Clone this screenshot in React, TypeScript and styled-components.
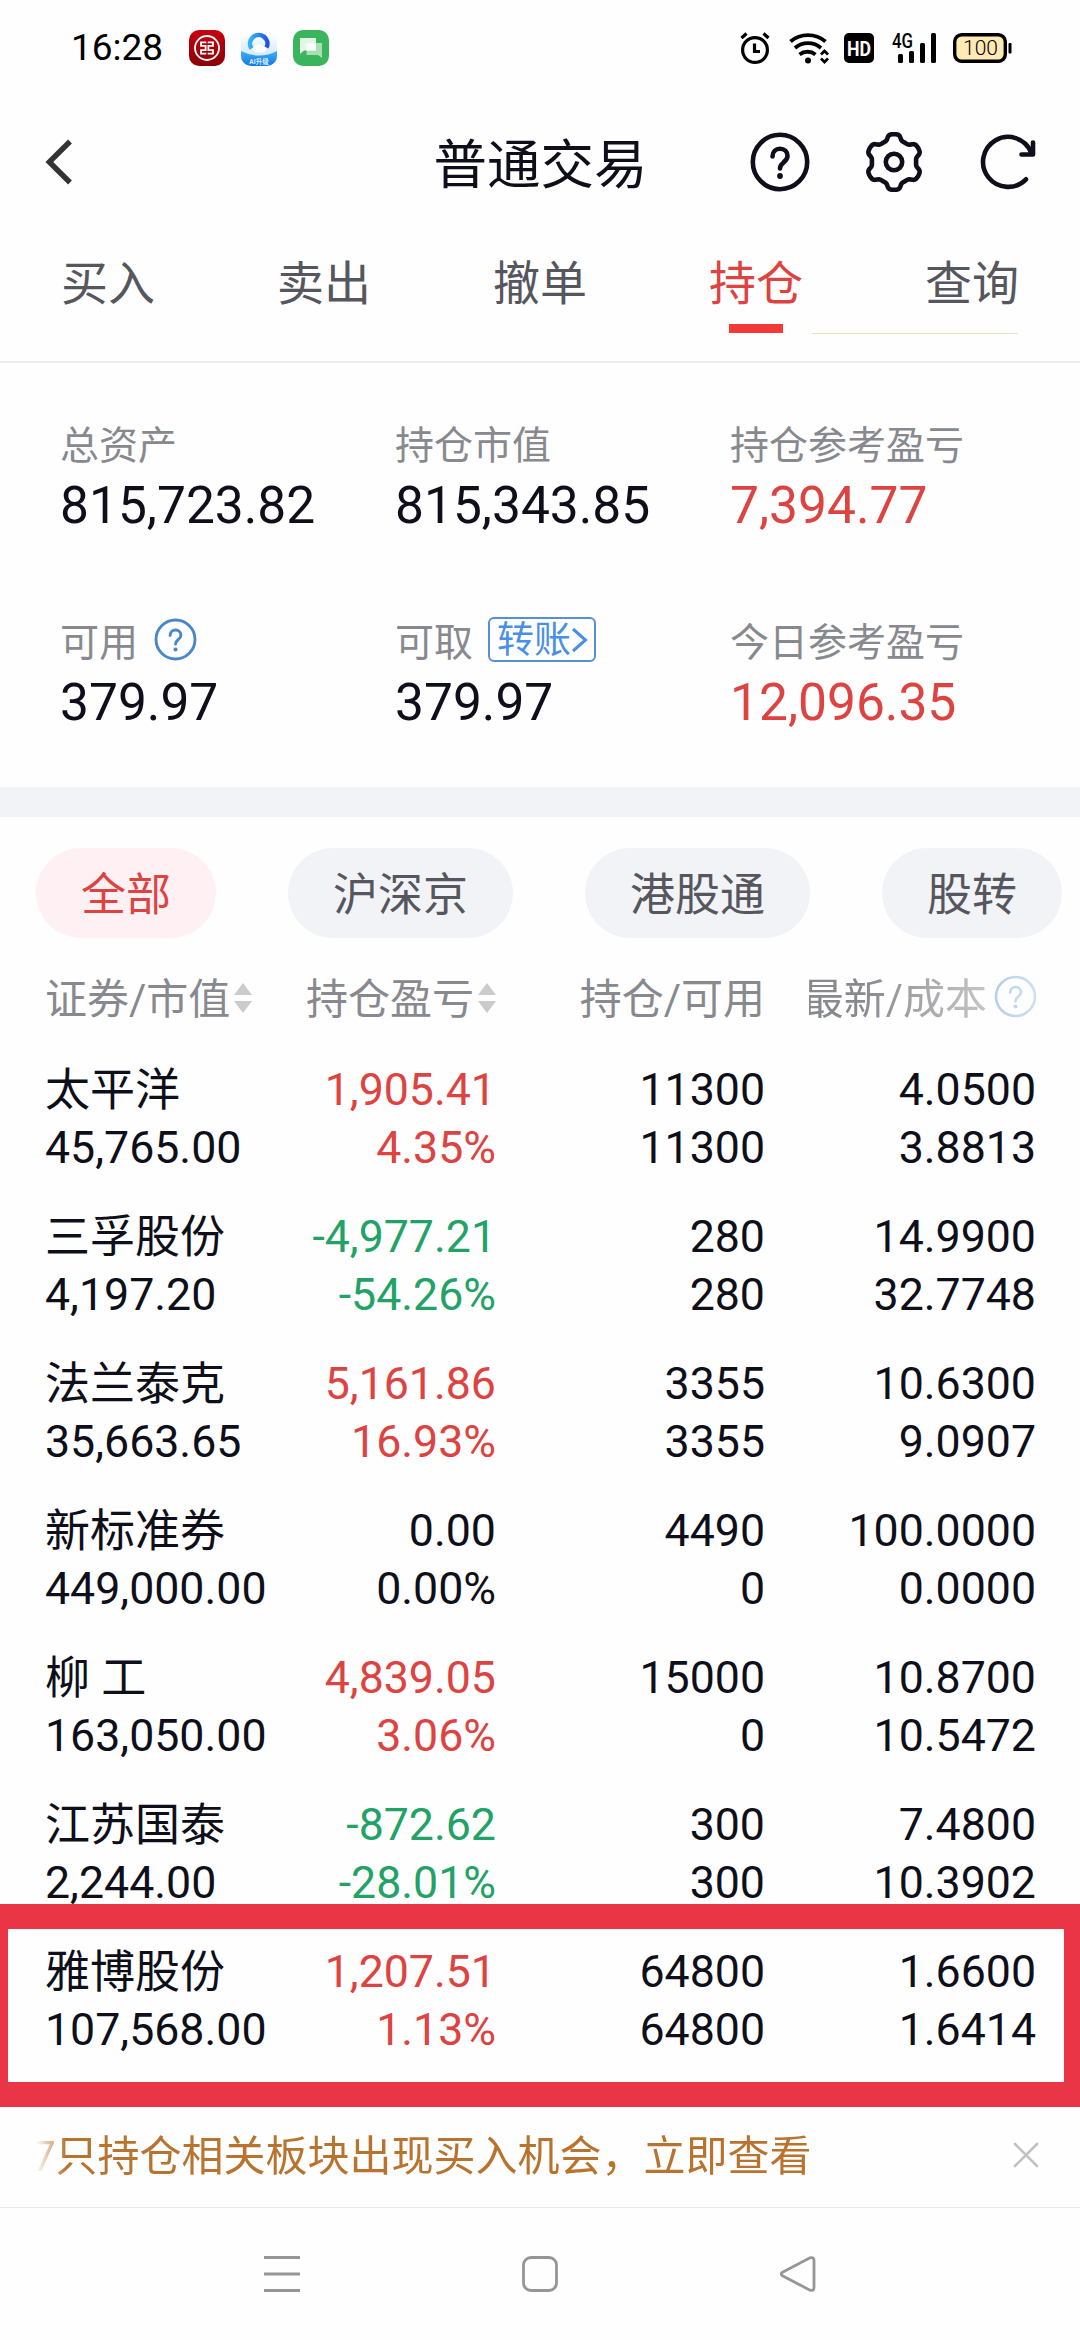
import React from 'react';
import styled, { createGlobalStyle } from 'styled-components';

const Global = createGlobalStyle`
  * { box-sizing: border-box; }
  body { margin: 0; background: #fefefe; }
`;

const INK = '#0e0f1a';
const RED = '#dd4341';
const GREEN = '#22a267';

const Screen = styled.main`
  position: relative;
  display: flex;
  flex-direction: column;
  width: 1080px;
  height: 2340px;
  overflow: hidden;
  background: #fefefe;
  color: ${INK};
  font-family: Roboto, 'Noto Sans CJK SC', sans-serif;
  white-space: nowrap;
`;

const StatusBar = styled.div`
  display: flex;
  align-items: center;
  height: 96px;
  padding: 0 68px 0 71px;
`;
const Clock = styled.time`
  width: 118px;
  font-size: 37px;
  line-height: 60px;
  color: #000;
`;
const AppIcons = styled.div`
  display: flex;
  gap: 16px;
  flex: 1;
`;
const Signals = styled.div`
  display: flex;
  align-items: center;
`;
const SignalIcon = styled.svg<{ $gap?: number }>`
  display: block;
  overflow: visible;
  margin-left: ${(p) => p.$gap ?? 0}px;
`;

const Header = styled.header`
  display: grid;
  grid-template-columns: 1fr auto 1fr;
  align-items: center;
  height: 132px;
  padding: 0 42px 0 43px;
`;
const Title = styled.h1`
  margin: 7px 0 0;
  font-size: 53.5px;
  font-weight: 400;
  line-height: 70px;
`;
const HeaderActions = styled.div`
  display: flex;
  justify-content: flex-end;
  gap: 54px;
`;

const Tabs = styled.nav`
  position: relative;
  display: grid;
  grid-template-columns: repeat(5, 1fr);
  height: 135px;
  padding-top: 26px;
  border-bottom: 2px solid #ececec;
`;
const Tab = styled.div<{ $active?: boolean }>`
  display: flex;
  flex-direction: column;
  align-items: center;
  gap: 10px;
  font-size: 47px;
  line-height: 60px;
  color: ${(p) => (p.$active ? RED : '#55565e')};
`;
const TabMark = styled.i`
  width: 54px;
  height: 9px;
  background: #f43a38;
`;
const HairLine = styled.i`
  position: absolute;
  left: 812px;
  top: 105px;
  width: 206px;
  height: 1px;
  background: #e6e2c0;
`;

const Summary = styled.section`
  display: grid;
  grid-template-columns: 335px 335px 1fr;
  row-gap: 82px;
  padding: 58px 0 54px 60px;
`;
const Figure = styled.div`
  display: flex;
  flex-direction: column;
  gap: 5px;
`;
const FigureLabel = styled.div`
  display: flex;
  align-items: center;
  height: 50px;
  font-size: 39px;
  line-height: 50px;
  color: #88898e;
`;
const FigureValue = styled.div<{ $color?: string }>`
  font-size: 51.5px;
  line-height: 60px;
  color: ${(p) => p.$color ?? INK};
`;
const LabelHelp = styled.span`
  display: flex;
  margin: 0 0 7px 16px;
`;
const Transfer = styled.span`
  display: flex;
  align-items: center;
  width: 108px;
  height: 45px;
  margin: 0 0 7px 15px;
  padding-left: 7px;
  border: 2px solid #5590d4;
  border-radius: 6px;
  font-size: 37px;
  line-height: 40px;
  color: #4a8fe6;
`;
const TransferText = styled.span`
  padding-top: 2px;
`;
const Band = styled.div`
  height: 30px;
  background: #f2f3f7;
`;

const Filters = styled.div`
  display: flex;
  gap: 72px;
  padding: 31px 0 37px 36px;
`;
const Pill = styled.div<{ $active?: boolean }>`
  height: 90px;
  padding: 0 45px;
  border-radius: 45px;
  font-size: 45px;
  line-height: 96px;
  color: ${(p) => (p.$active ? RED : '#55565e')};
  background: ${(p) => (p.$active ? '#fff1f3' : '#f2f3f7')};
`;

const columns = 'grid-template-columns: 225px 226px 269px 271px;';
const TableHead = styled.div`
  display: grid;
  ${columns}
  height: 50px;
  margin-bottom: 36px;
  padding-left: 45px;
  font-size: 42px;
  line-height: 50px;
  color: #88898e;
`;
const HeadCell = styled.div<{ $right?: boolean }>`
  display: flex;
  align-items: center;
  gap: 4px;
  justify-content: ${(p) => (p.$right ? 'flex-end' : 'flex-start')};
`;
const FadingCell = styled(HeadCell)`
  width: 228px;
  margin: 0 -1px 0 auto;
  gap: 7px;
  overflow: hidden;
  mask-image: linear-gradient(90deg, #000 22%, rgba(0, 0, 0, 0.28) 100%);
  > * { flex-shrink: 0; }
`;
const HeadHelp = styled.span`
  display: flex;
  margin-bottom: 7px;
`;
const SortSvg = styled.svg`
  display: block;
  margin-bottom: 5px;
  flex-shrink: 0;
`;

const Holdings = styled.div`
  display: flex;
  flex-direction: column;
  gap: 31px;
  height: 1046px;
`;
const Holding = styled.div`
  display: grid;
  ${columns}
  padding-left: 45px;
  font-size: 44.7px;
  line-height: 58px;
`;
const Cell = styled.div<{ $right?: boolean; $color?: string }>`
  display: flex;
  flex-direction: column;
  align-items: ${(p) => (p.$right ? 'flex-end' : 'flex-start')};
  white-space: pre;
  color: ${(p) => p.$color ?? INK};
`;
const StockName = styled.span`
  font-size: 45px;
  line-height: 60px;
`;
const StockValue = styled.span`
  line-height: 54px;
`;
const Marker = styled.div`
  position: absolute;
  left: 0;
  top: 1904px;
  width: 1080px;
  height: 203px;
  border: solid #ea3547;
  border-width: 25px 16px 25px 8px;
`;

const Notice = styled.div`
  display: flex;
  align-items: center;
  justify-content: space-between;
  height: 101px;
  padding: 0 41px 0 32px;
  border-bottom: 1px solid #e9e9e9;
`;
const NoticeText = styled.div`
  font-size: 42px;
  line-height: 60px;
  color: #b8732f;
  mask-image: linear-gradient(90deg, transparent 4px, #000 34px);
`;
const CloseIcon = styled.svg`
  display: block;
  margin-bottom: 5px;
`;

const NavBar = styled.nav`
  display: flex;
  justify-content: space-between;
  align-items: center;
  height: 132px;
  padding: 0 262px;
`;

const HelpIcon = ({ size, color, width }: { size: number; color: string; width: number }) => (
  <svg width={size} height={size} viewBox="0 0 60 60" fill="none" stroke={color} strokeWidth={width} strokeLinecap="round">
    <circle cx="30" cy="30" r="27.2" />
    <path d="M22.500 24.500c0-4.600 3.200-7.800 7.500-7.800s7.500 3 7.500 7.200c0 3.400-2 5-4.200 6.800-2.200 1.700-3.300 3-3.300 5.800" />
    <circle cx="30" cy="44" r="2.900" fill={color} stroke="none" />
  </svg>
);

const SortIcon = () => (
  <SortSvg width="18" height="30" viewBox="0 0 18 30" fill="#cbcbcb">
    <path d="M9 0l9 12H0zM9 30l9-12H0z" />
  </SortSvg>
);

const BankIcon = () => (
  <svg width="36" height="36" viewBox="0 0 36 36">
    <defs>
      <linearGradient id="bank" x1="0" y1="0" x2="0" y2="1">
        <stop offset="0" stopColor="#c8000f" />
        <stop offset="1" stopColor="#8a0005" />
      </linearGradient>
    </defs>
    <rect width="36" height="36" rx="10" fill="url(#bank)" />
    <g fill="none" stroke="#fff">
      <circle cx="18" cy="18" r="12" strokeWidth="1.800" />
      <path d="M17.300 12.300H12v3.600h4.600v4.200H12v3.600h5.300M18.700 12.300H24v3.600h-4.600v4.200H24v3.600h-5.300" strokeWidth="1.800" />
    </g>
  </svg>
);

const BrowserIcon = () => (
  <svg width="36" height="36" viewBox="0 0 36 36">
    <defs>
      <linearGradient id="ring" x1="0" y1="0.500" x2="1" y2="0.600">
        <stop offset="0" stopColor="#34b3fa" />
        <stop offset="1" stopColor="#2350e0" />
      </linearGradient>
      <linearGradient id="sky" x1="0" y1="0" x2="0" y2="1">
        <stop offset="0.100" stopColor="#fefefe" />
        <stop offset="0.600" stopColor="#d6eefe" />
      </linearGradient>
      <linearGradient id="sea" x1="0" y1="0" x2="0" y2="1">
        <stop offset="0" stopColor="#45aef8" />
        <stop offset="1" stopColor="#0f77e2" />
      </linearGradient>
      <clipPath id="tile"><rect width="36" height="36" rx="10" /></clipPath>
    </defs>
    <g clipPath="url(#tile)">
      <rect width="36" height="36" fill="url(#sky)" />
      <path d="M0 21q18 9 36 0v15H0z" fill="url(#sea)" />
    </g>
    <path d="M10.500 18.500a8.700 8.700 0 1 1 15-1" fill="none" stroke="url(#ring)" strokeWidth="4.500" />
    <path d="M12 21a4 4 0 0 1 2-5 5 5 0 0 1 8 0 4 4 0 0 1 3 5q-6.500 3-13 0z" fill="#fff" />
    <text x="18" y="33.500" fontSize="6.500" fontWeight="700" fill="#dff1ff" textAnchor="middle">AI升级</text>
  </svg>
);

const ChatIcon = () => (
  <svg width="36" height="36" viewBox="0 0 36 36">
    <rect width="36" height="36" rx="10" fill="#3bb55d" />
    <path d="M13.500 13h15.500v15l-4-3H13.500z" fill="#a8e0b4" />
    <path d="M7 8h16v12.500H11L7 24z" fill="#e3f6e6" />
    <rect x="13.500" y="13" width="9.500" height="7.500" fill="#fff" opacity="0.700" />
  </svg>
);

const gearPath = (() => {
  const points: string[] = [];
  for (let i = 0; i <= 180; i += 1) {
    const a = (i / 180) * Math.PI * 2;
    const wave = Math.tanh(2 * Math.cos(6 * a)) / Math.tanh(2);
    const r = 25 + 2.9 * wave;
    points.push(`${(30 + r * Math.sin(a)).toFixed(2)} ${(30 - r * Math.cos(a)).toFixed(2)}`);
  }
  return `M${points.join('L')}Z`;
})();

const holdings: { name: string; value: string; gain: string; rate: string; held: string; free: string; last: string; cost: string; tone?: string }[] = [
  { name: '太平洋', value: '45,765.00', gain: '1,905.41', rate: '4.35%', held: '11300', free: '11300', last: '4.0500', cost: '3.8813', tone: RED },
  { name: '三孚股份', value: '4,197.20', gain: '-4,977.21', rate: '-54.26%', held: '280', free: '280', last: '14.9900', cost: '32.7748', tone: GREEN },
  { name: '法兰泰克', value: '35,663.65', gain: '5,161.86', rate: '16.93%', held: '3355', free: '3355', last: '10.6300', cost: '9.0907', tone: RED },
  { name: '新标准券', value: '449,000.00', gain: '0.00', rate: '0.00%', held: '4490', free: '0', last: '100.0000', cost: '0.0000' },
  { name: '柳 工', value: '163,050.00', gain: '4,839.05', rate: '3.06%', held: '15000', free: '0', last: '10.8700', cost: '10.5472', tone: RED },
  { name: '江苏国泰', value: '2,244.00', gain: '-872.62', rate: '-28.01%', held: '300', free: '300', last: '7.4800', cost: '10.3902', tone: GREEN },
  { name: '雅博股份', value: '107,568.00', gain: '1,207.51', rate: '1.13%', held: '64800', free: '64800', last: '1.6600', cost: '1.6414', tone: RED },
];

export default function App() {
  return (
    <Screen lang="zh-CN">
      <Global />
      <StatusBar>
        <Clock>16:28</Clock>
        <AppIcons>
          <BankIcon />
          <BrowserIcon />
          <ChatIcon />
        </AppIcons>
        <Signals>
          <SignalIcon width="30" height="32" viewBox="0 0 30 32" fill="none" stroke="#000" strokeWidth="3.200">
            <circle cx="15" cy="18" r="12.400" />
            <path d="M14.500 11.500v8h5.500" />
            <path d="M1.500 6l5-4.500M28.500 6l-5-4.500" />
          </SignalIcon>
          <SignalIcon $gap={19} width="40" height="31" viewBox="0 0 40 31" fill="none" stroke="#000" strokeWidth="3.800">
            <path d="M1.500 8.500a27 27 0 0 1 35 0M6 15a20 20 0 0 1 26 0M10.500 21.500a13 13 0 0 1 16 0" />
            <circle cx="19" cy="27.500" r="3" fill="#000" stroke="none" />
            <path d="M32 21.500l3.500-3.500 3.500 3.500M32 25.500l3.500 3.500 3.500-3.500" strokeWidth="2.700" />
          </SignalIcon>
          <SignalIcon $gap={15} width="30" height="30" viewBox="0 0 30 30">
            <rect width="30" height="30" rx="5" />
            <text x="15" y="22.500" fontSize="21" fontWeight="700" fill="#fff" textAnchor="middle" textLength="24" lengthAdjust="spacingAndGlyphs">HD</text>
          </SignalIcon>
          <SignalIcon $gap={17} width="46" height="30" viewBox="0 0 46 30">
            <text x="1" y="14.500" fontSize="20" fontWeight="500" textLength="21" lengthAdjust="spacingAndGlyphs">4G</text>
            <rect x="7" y="21" width="5" height="9" rx="1.500" />
            <rect x="18" y="18" width="5" height="12" rx="1.500" />
            <rect x="29" y="10" width="5" height="20" rx="1.500" />
            <rect x="40" y="0" width="5" height="30" rx="1.500" />
          </SignalIcon>
          <SignalIcon $gap={16} width="59" height="30" viewBox="0 0 59 30">
            <rect x="1.700" y="1.700" width="50.600" height="26.600" rx="7" fill="#ffe9b5" stroke="#000" strokeWidth="3.400" />
            <rect x="55.500" y="10" width="3" height="10.500" rx="1" />
            <text x="27.500" y="22" fontSize="21" fontWeight="300" textAnchor="middle">100</text>
          </SignalIcon>
        </Signals>
      </StatusBar>

      <Header>
        <svg width="32" height="48" viewBox="0 0 32 48" fill="none" stroke="#333" strokeWidth="5.400">
          <path d="M27 3.500L6.300 24 27 44.500" />
        </svg>
        <Title>普通交易</Title>
        <HeaderActions>
          <HelpIcon size={60} color={INK} width={4.6} />
          <svg width="60" height="60" viewBox="0 0 60 60" fill="none" stroke={INK} strokeWidth="4.600" strokeLinejoin="round">
            <path d={gearPath} />
            <circle cx="30" cy="30" r="8.200" />
          </svg>
          <svg width="60" height="60" viewBox="0 0 60 60" fill="none" stroke={INK} strokeWidth="4.600" strokeLinecap="round" strokeLinejoin="round">
            <path d="M48 47.300A25 25 0 1 1 53 20" />
            <path d="M55 10.500v12H43.500" />
          </svg>
        </HeaderActions>
      </Header>

      <Tabs>
        <Tab>买入</Tab>
        <Tab>卖出</Tab>
        <Tab>撤单</Tab>
        <Tab $active>
          持仓
          <TabMark />
        </Tab>
        <Tab>查询</Tab>
        <HairLine />
      </Tabs>

      <Summary>
        <Figure>
          <FigureLabel>总资产</FigureLabel>
          <FigureValue>815,723.82</FigureValue>
        </Figure>
        <Figure>
          <FigureLabel>持仓市值</FigureLabel>
          <FigureValue>815,343.85</FigureValue>
        </Figure>
        <Figure>
          <FigureLabel>持仓参考盈亏</FigureLabel>
          <FigureValue $color={RED}>7,394.77</FigureValue>
        </Figure>
        <Figure>
          <FigureLabel>
            可用
            <LabelHelp><HelpIcon size={43} color="#4a86cc" width={4} /></LabelHelp>
          </FigureLabel>
          <FigureValue>379.97</FigureValue>
        </Figure>
        <Figure>
          <FigureLabel>
            可取
            <Transfer>
              <TransferText>转账</TransferText>
              <svg width="18" height="28" viewBox="0 0 18 28" fill="none" stroke="#4a8fe6" strokeWidth="3">
                <path d="M2 3l12.500 11L2 25" />
              </svg>
            </Transfer>
          </FigureLabel>
          <FigureValue>379.97</FigureValue>
        </Figure>
        <Figure>
          <FigureLabel>今日参考盈亏</FigureLabel>
          <FigureValue $color={RED}>12,096.35</FigureValue>
        </Figure>
      </Summary>
      <Band />

      <Filters>
        <Pill $active>全部</Pill>
        <Pill>沪深京</Pill>
        <Pill>港股通</Pill>
        <Pill>股转</Pill>
      </Filters>

      <TableHead>
        <HeadCell>证券/市值<SortIcon /></HeadCell>
        <HeadCell $right>持仓盈亏<SortIcon /></HeadCell>
        <HeadCell $right>持仓/可用</HeadCell>
        <FadingCell $right>
          <span>最新/成本</span>
          <HeadHelp><HelpIcon size={43} color="#5b95dc" width={3.6} /></HeadHelp>
        </FadingCell>
      </TableHead>

      <Holdings>
        {holdings.map((h) => (
          <Holding key={h.name}>
            <Cell><StockName>{h.name}</StockName><StockValue>{h.value}</StockValue></Cell>
            <Cell $right $color={h.tone}><span>{h.gain}</span><span>{h.rate}</span></Cell>
            <Cell $right><span>{h.held}</span><span>{h.free}</span></Cell>
            <Cell $right><span>{h.last}</span><span>{h.cost}</span></Cell>
          </Holding>
        ))}
      </Holdings>
      <Marker />

      <Notice>
        <NoticeText>7只持仓相关板块出现买入机会，立即查看</NoticeText>
        <CloseIcon width="26" height="26" viewBox="0 0 26 26" stroke="#c2c2c2" strokeWidth="2.600" strokeLinecap="round">
          <path d="M2 2l22 22M24 2L2 24" />
        </CloseIcon>
      </Notice>

      <NavBar>
        <svg width="40" height="40" viewBox="0 0 40 40" stroke="#969696" strokeWidth="3">
          <path d="M2 3.500h36M2 20h36M2 36.500h36" />
        </svg>
        <svg width="40" height="40" viewBox="0 0 40 40" fill="none" stroke="#969696" strokeWidth="2.800">
          <rect x="3.500" y="3.500" width="33" height="33" rx="7.500" />
        </svg>
        <svg width="40" height="40" viewBox="0 0 40 40" fill="none" stroke="#969696" strokeWidth="2.800">
          <path d="M4.500 18.200L32 3.800q4-1 4 2.700v27q0 3.700-4 2.700L4.500 21.800q-2.600-1.800 0-3.600z" />
        </svg>
      </NavBar>
    </Screen>
  );
}
